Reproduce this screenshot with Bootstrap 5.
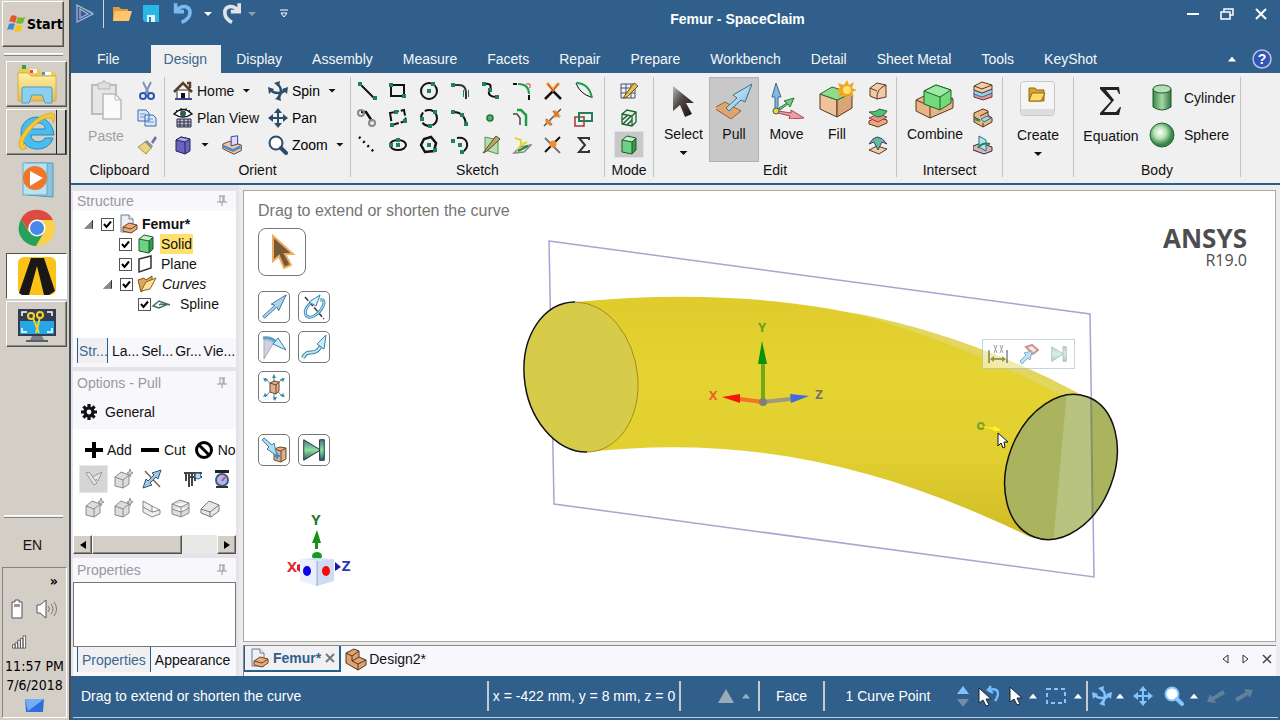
<!DOCTYPE html>
<html lang="en">
<head>
<meta charset="utf-8">
<meta name="viewport" content="width=device-width, initial-scale=1">
<title>Femur - SpaceClaim</title>
<link href="https://cdn.jsdelivr.net/npm/bootstrap@5.3.0/dist/css/bootstrap.min.css" rel="stylesheet">
<style>
:root{--blue:#2f5f8a;--ribbon:#f0f0f0;--panel:#f7f7fc;--task:#d3cfc7}
body{font-family:"Liberation Sans",Arial,sans-serif;font-size:14px;line-height:20px;color:#111;background:var(--blue)}
button{font:inherit;color:inherit;border:0;background:none;padding:0}
a{color:inherit;text-decoration:none}
svg{display:block;flex:none}
.i14{width:14px;height:14px}.i20{width:20px;height:20px}.i24{width:24px;height:24px}.i28{width:28px;height:28px}.i36{width:36px;height:36px}
.dn{width:8px;height:4px;background:#111;clip-path:polygon(0 0,100% 0,50% 100%)}
.up{width:8px;height:5px;background:#fff;clip-path:polygon(50% 0,100% 100%,0 100%)}
/* Windows taskbar */
.taskbar{width:71px;background:var(--task);border-right:2px solid #4a4d50;flex:none;padding:1px 2px 2px}
.raised{border:1px solid;border-color:#fff #55524e #55524e #fff;box-shadow:inset -1px -1px #8d8a84}
.task{width:61px;height:46px;margin:0 0 2px 4px;display:flex;align-items:center;justify-content:center}
.task svg{width:40px;height:40px}
.start{width:62px;height:46px;font-family:"DejaVu Sans Condensed","DejaVu Sans",sans-serif;font-weight:700;font-size:14px;color:#000}
.rule{height:3px;margin:6px 4px 5px 2px;border-top:1px solid #fff;border-bottom:1px solid #86837e;background:#eee}
.open{background:#fff;border:1px solid;border-color:#55524e #fff #fff #55524e}
.tray{height:151px;border:1px solid;border-color:#86837e #fff #fff #86837e;width:65px;font-family:"DejaVu Sans Condensed","DejaVu Sans",sans-serif;font-size:14px;line-height:19px;color:#000}
/* title and tabs */
.titlebar{height:45px;background:var(--blue);color:#fff}
.quick{height:28px}
.tabrow{height:28px;background:var(--blue);color:#f4f7fa}
.tabrow .rtab{height:28px;padding:0 15px;display:flex;align-items:center;white-space:nowrap}
.tabrow .rtab.first{padding-left:26px;padding-right:31px}
.tabrow .rtab.on{background:var(--ribbon);color:#3a688f;padding:0 14px 0 13px}
/* ribbon */
.ribbon{height:112px;background:var(--ribbon);border-bottom:2px solid #24608c;padding-top:4px}
.grp{height:100px;border-right:1px solid #c3c3c3;display:flex;flex-direction:column;flex:none}
.grp>.gb{height:84px;display:flex}
.grp>.gl{height:16px;line-height:18px;text-align:center}
.rows{display:grid;grid-template-rows:repeat(3,27px);align-items:center}
.sk{display:grid;grid-template-columns:repeat(8,31px);grid-template-rows:repeat(3,27px);place-items:center}
.big{display:flex;flex-direction:column;align-items:center;height:85px;border:1px solid transparent;padding-top:5px;white-space:nowrap}
.big svg{margin-bottom:5px}
.big .dn{margin-top:7px;margin-bottom:4px}
.pressed{background:#c8c8c8;border-color:#b0b0b0}
/* docked panels */
.dock{width:168px;background:#e3e3e8;flex:none;padding:6px 3px 0 2px}
.pane{background:var(--panel)}
.phead{height:20px;color:#9999a0;padding:0 8px 0 4px;display:flex;justify-content:space-between;align-items:center}
.phead.tall{height:24px}
.tree{height:127px;background:#fff;padding-top:3px}
.tree .node{height:20px;display:flex;align-items:center;white-space:nowrap}
.node.n0{padding-left:11px}.node.n1{padding-left:30px}.node.n2{padding-left:46px}.node.n3{padding-left:65px}
.node input{appearance:none;width:13px;height:13px;margin:0;border:1px solid #555;background:#fff url("data:image/svg+xml,%3Csvg xmlns='http://www.w3.org/2000/svg' viewBox='0 0 22 22'%3E%3Cpath d='M4 10l5 6L18 5' fill='none' stroke='%23000' stroke-width='4'/%3E%3C/svg%3E")}
.node label{padding:0 1px}
.node label.hot{background:#ffe06f}
.tw{width:9px;height:9px;background:linear-gradient(135deg,transparent 50%,#888 51%);border-bottom:1px solid #333;border-right:1px solid #333;clip-path:polygon(100% 0,100% 100%,0 100%)}
.ptabs{height:29px;padding-left:4px;display:flex}
.ptabs button{height:25px;padding:0 4px;white-space:nowrap}
.ptabs button.on{color:#3a688f;background:#f0f0f3;border:solid #24608c;border-width:0 1px;}
.ptabs.tight button{padding:0 1px}
.ptabs.tight button.on{margin-right:3px}
.split{height:4px;background:#e3e3e8}
.gen{height:34px}
.opt{height:106px;background:#fff;overflow:hidden;padding:8px 0 0 6px}
.mode{height:25px;margin-bottom:2px;gap:8px}
.ic5{display:flex;height:29px;align-items:center}
.ic5>*{width:29px;display:flex;justify-content:center;height:28px;align-items:center;flex:none}
.sb{height:19px;background:#e8e8e6}
.sb>*{height:19px;background:var(--task)}
.sb button{width:19px;display:flex;align-items:center;justify-content:center}
.thumb{width:55%}
/* work area */
.work{background:#ebebf0;padding:5px 4px 0 4px}
.view{background:#fff;border:1px solid #aaa99b;min-height:300px}
.canvas3d{inset:0}
.overlay{padding:11px 14px;width:300px}
.hint{font-size:16px;color:#757575;height:26px;line-height:18px}
.tool{width:32px;height:32px;border:1px solid #777;border-radius:5px;background:#fff;display:flex;align-items:center;justify-content:center}
.tool.large{width:48px;height:48px;border-radius:8px}
.tools{display:grid;grid-template-columns:32px 32px;gap:8px;margin-top:15px}
.tools.after{margin-top:31px}
.brand{font-family:"Open Sans","Noto Sans",sans-serif;color:#4d4d4f;text-align:right;top:29px;right:28px}
.brand b{font-size:26px;line-height:36px;display:block}
.brand span{font-size:16px;line-height:20px;margin-top:-6px;display:block}
.mini{left:71.6%;top:32.8%;width:93px;height:30px;border:1px solid #a9c4d4;background:rgba(255,255,255,.75);opacity:.7}
.docs{height:31px;margin-top:3px;background:var(--panel);border-top:1px solid #888;border-left:1px solid #888}
.doc{height:26px;padding:0 4px}
.doc.on{border:solid #24608c;border-width:0 2px 2px 1px;background:#f1f1f3;color:#2f5f8a;font-weight:700}
/* status bar */
.status{height:44px;background:var(--blue);color:#fff;padding-bottom:4px;position:relative;white-space:nowrap}
.status::after{content:"";position:absolute;left:2px;right:2px;bottom:2px;height:1px;background:#c8ccd0}
.cell{height:30px;border-left:2px solid #c2cad2;display:flex;align-items:center}
.st{display:flex;justify-content:center;align-items:center}
.lt{color:#84c4ff}
.nav3d{color:#2d4c6b}
</style>
</head>
<body>
<svg width="0" height="0" class="position-absolute" aria-hidden="true">
<defs>
<linearGradient id="gTube" x1="0" y1="0" x2="0" y2="1"><stop offset="0" stop-color="#dfcc2c"/><stop offset=".3" stop-color="#e5d332"/><stop offset=".65" stop-color="#e2d030"/><stop offset="1" stop-color="#cfba25"/></linearGradient>
<linearGradient id="gY" x1="0" y1="0" x2="0" y2="1"><stop offset="0" stop-color="#fff2a8"/><stop offset="1" stop-color="#e5bd4c"/></linearGradient>
<linearGradient id="gDk" x1="0" y1="0" x2="1" y2="1"><stop offset="0" stop-color="#bbb"/><stop offset=".4" stop-color="#554a48"/><stop offset="1" stop-color="#1b0e0a"/></linearGradient>
<linearGradient id="gCy"><stop offset="0" stop-color="#3b8748"/><stop offset=".5" stop-color="#a8d8a8"/><stop offset="1" stop-color="#2f763d"/></linearGradient>
<radialGradient id="gSp" cx=".42" cy=".4"><stop offset="0" stop-color="#fff"/><stop offset=".5" stop-color="#b4e2b5"/><stop offset="1" stop-color="#388546"/></radialGradient>
<linearGradient id="gTeal" x1="0" y1="0" x2="0" y2="1"><stop offset="0" stop-color="#4a7a90"/><stop offset=".5" stop-color="#8fe0a0"/><stop offset="1" stop-color="#2c5a6b"/></linearGradient>
<linearGradient id="gBl" x1="0" y1="0" x2="1" y2="1"><stop offset="0" stop-color="#e8faff"/><stop offset="1" stop-color="#6eb4de"/></linearGradient>
</defs>
<symbol id="cube" viewBox="0 0 20 20"><path d="M3 5l5-4 9 2-4 4z" fill="#c3f0c8"/><path d="M3 5l10 2v12L3 17z" fill="#6fd184"/><path d="M13 7l4-4v12l-4 4z" fill="#36984d"/><path d="M3 5l5-4 9 2v12l-4 4-10-2zM3 5l10 2v12M13 7l4-4" fill="none" stroke="#1a5a2b"/></symbol>
<symbol id="gbox" viewBox="0 0 20 20"><path d="M2 8l6-5 8 3v9l-6 4-8-2z" fill="#ddd" stroke="#8a8a8a"/><path d="M2 8l8 3 6-5M10 11v8" fill="none" stroke="#8a8a8a"/><path d="M17 0l1 3 2 1-2 1-1 3-1-3-2-1 2-1z" fill="#ccc" stroke="#999"/></symbol>
<symbol id="slabs" viewBox="0 0 20 20"><path d="M1 12l8 3 10-3v4l-9 3-9-3z" fill="#e9909a" stroke="#6b3434"/><path d="M1 9l8 3 10-4v4l-10 4-8-3z" fill="#93d2ef" stroke="#3a6f93"/><path d="M1 5l8-4 10 3v4L9 12 1 9z" fill="#f2cda9" stroke="#5b3823"/><path d="M1 5l8 3 10-4" fill="none" stroke="#5b3823"/></symbol>
<symbol id="cur" viewBox="0 0 20 20"><path d="M4 1v15l4-3 3 6 3-1-3-6h5z" stroke="#1b2733" stroke-width="1"/></symbol>
<symbol id="pin" viewBox="0 0 12 12"><path d="M3 1h6M4 1v6M8 1v6M1 7h10M6 7v4M7 1v6" fill="none" stroke="#999" stroke-width="1"/></symbol>
<symbol id="pan" viewBox="0 0 20 20"><path d="M10 2v16M2 10h16" stroke="currentColor" stroke-width="2" fill="none"/><path d="M10 0l4 5H6zM10 20l4-5H6zM0 10l5-4v8zM20 10l-5-4v8z" fill="currentColor"/></symbol>
<symbol id="spin" viewBox="0 0 20 20"><path d="M3 9c3 4 11 4 14 0M9 3c5 3 5 10 1 14" fill="none" stroke="currentColor" stroke-width="2.500"/><path d="M0 6l1 7 5-5zM20 6l-1 7-5-5zM6 2l6-2-1 6zM7 18l6 2-1-6z" fill="currentColor"/></symbol>
<symbol id="zoomi" viewBox="0 0 20 20"><circle cx="8" cy="8" r="6.500" fill="#fff" stroke="currentColor" stroke-width="2"/><path d="M13 13l5 5" stroke="currentColor" stroke-width="4" stroke-linecap="round"/></symbol>
<symbol id="docic" viewBox="0 0 20 20"><path d="M3 1h8l4 4v13H3z" fill="#edf1f7" stroke="#6e7a8c"/><path d="M11 1v4h4" fill="#fff" stroke="#6e7a8c"/><path d="M5 13l6-4 8 2v4l-6 4-8-2z" fill="#e9ad7b" stroke="#6b4227"/><path d="M5 13l8 2 6-4" fill="none" stroke="#6b4227"/></symbol>
<symbol id="barrow" viewBox="0 0 30 30"><path d="M3 25l13-12-4-1L28 2l-8 17-2-4L5 27z" fill="url(#gBl)" stroke="#3d6d8d"/></symbol>
<symbol id="playend" viewBox="0 0 30 30"><path d="M4 4l18 11L4 26z" fill="url(#gTeal)" stroke="#12303a"/><path d="M21 4h5v22h-5z" fill="url(#gTeal)" stroke="#12303a"/></symbol>
</svg>

<div class="d-flex vh-100 overflow-hidden">
<!-- Windows taskbar -->
<aside class="taskbar d-flex flex-column">
  <button class="start raised d-flex align-items-center px-0"><svg width="20" height="20" viewBox="0 0 20 20" class="ms-1"><path d="M4 2c2-1 4-1 6 1L8 9C6 8 4 7 2 8z" fill="#e4572a"/><path d="M11 3c2 1 5 1 7 0l-2 6c-2 1-4 1-7 0z" fill="#78b82a"/><path d="M2 10c2-1 4-1 6 0l-2 6c-2-1-4-1-6 0z" fill="#3a8ad6"/><path d="M9 11c2 1 4 1 6 0l-1 6c-2 1-5 1-7 0z" fill="#f6c321"/></svg>Start</button>
  <div class="rule"></div>
  <button class="task raised" aria-label="File Explorer"><svg viewBox="0 0 40 40"><path d="M2 3h8l2 2h10l2 3h15v27H2z" fill="#f0c95c"/><path d="M5 1h4v4H5z" fill="#3b9e4c"/><path d="M13 5h7v4h-7z" fill="#f6f6ee"/><path d="M13 6h3v3h-3z" fill="#e94a3c"/><path d="M25 8h9v3h-9z" fill="#fff"/><path d="M25 8h3v3h-3z" fill="#4a90d9"/><path d="M1 9h10l3 3h25v25H1z" fill="url(#gY)" stroke="#d3ac46"/><path d="M5 39V25q0-2 2-2h26q2 0 2 2v14h-7l-3-8H15l-3 8z" fill="#8bd0ee" stroke="#4d9cc8"/></svg></button>
  <button class="task raised position-relative" aria-label="Internet Explorer"><svg viewBox="0 0 40 40"><path d="M37 23H14c0 8 11 9 14 3h8c-4 16-32 15-32-5S34-2 37 23zM14 17h14c0-8-13-8-14 0z" fill="#49bdee" stroke="#2287c4"/><path d="M5 38C-6 31 16 3 34 1c4 0 5 4 2 10C37 2 25 6 17 14 7 25 3 33 10 36z" fill="#f7c92e" stroke="#d49d17" stroke-width=".7"/></svg><span class="position-absolute h-100 end-0 border-start border-end border-dark px-1"></span></button>
  <button class="task" aria-label="Media Player"><svg viewBox="0 0 40 40"><path d="M10 3h26v34l-26-2z" fill="#8cc4df" stroke="#5598bb"/><path d="M6 3h24v32H6z" fill="#b9e1f2" stroke="#69a8c9"/><circle cx="18" cy="18" r="12" fill="#f0762a"/><path d="M13 11l13 7-13 8z" fill="#fff"/></svg></button>
  <button class="task" aria-label="Chrome"><svg viewBox="0 0 40 40"><circle cx="20" cy="20" r="18" fill="#fcd04b"/><path d="M12 24L4 11Q-2 24 7 33q6 5 12 5l8-14z" fill="#25a05d"/><path d="M4 11A18 18 0 0 1 36 12H20q-6 0-8 6l-1 4z" fill="#dd4b3e"/><circle cx="20" cy="20" r="8.500" fill="#fff"/><circle cx="20" cy="20" r="7" fill="#4788ea"/></svg></button>
  <button class="task open" aria-label="SpaceClaim"><svg viewBox="0 0 40 40"><rect x="1" y="1" width="38" height="38" rx="6" fill="#fbc317"/><path d="M2 37L14 2h13l11 33-6 4h-5L20 10 12 39H5z" fill="#191817"/></svg></button>
  <button class="task raised" aria-label="Snipping recorder"><svg viewBox="0 0 40 40"><path d="M1 5h38v27H1z" fill="#343c50"/><path d="M3 17h34v13H3z" fill="#24a8e5"/><path d="M15 32h10l2 4H13z" fill="#788089"/><path d="M9 36h22v2H9z" fill="#596069"/><path d="M5 12V8h5M30 8h5v4M5 24v4h5M30 28h5v-4" stroke="#fff" fill="none" stroke-width="1.500"/><path d="M16 14l6 15M23 13l-4 16" stroke="#f2d326" stroke-width="2"/><circle cx="14" cy="12" r="3" fill="none" stroke="#f2d326" stroke-width="2"/><circle cx="23" cy="11" r="3" fill="none" stroke="#f2d326" stroke-width="2"/></svg></button>
  <div class="mt-auto rule"></div>
  <div class="text-center mt-2 mb-2 pe-1 py-1">EN</div>
  <div class="tray d-flex flex-column px-0">
    <b class="text-end pe-2 pt-1">»</b>
    <div class="d-flex px-2 pt-2 justify-content-between"><svg width="12" height="20" viewBox="0 0 12 20"><path d="M1 3h3V1h4v2h3v16H1z" fill="#fff" stroke="#555"/><path d="M3 5h6v3H3z" fill="#999"/></svg><svg width="22" height="20" viewBox="0 0 22 20"><path d="M1 6h3l6-5v18l-6-5H1z" fill="#fff" stroke="#555"/><path d="M12 7q3 3 0 6M15 5q4 5 0 10M18 3q5 7 0 14" fill="none" stroke="#777"/></svg></div>
    <svg class="ms-2 mt-3" width="17" height="14" viewBox="0 0 17 16"><path d="M.5 11h3v4h-3zM3.500 9h3v6h-3zM6.500 6h3v9h-3zM9.500 4h3v11h-3zM12.500 1h3v14h-3z" fill="#fff" stroke="#555"/></svg>
    <div class="text-center text-nowrap mt-2">11:57 PM<br>7/6/2018</div>
    <svg class="mx-auto mt-1" width="19" height="14" viewBox="0 0 19 14"><path d="M0 0h19l-1 13H1z" fill="#2f6fdd"/><path d="M0 0h19L3 12z" fill="#76adf2"/></svg>
  </div>
</aside>

<div class="d-flex flex-column flex-grow-1" style="min-width:0">
<header class="titlebar d-flex justify-content-between position-relative">
  <div class="quick d-flex align-items-center ps-1">
    <svg class="i20" viewBox="0 0 20 20"><path d="M2 1v17l16-8zM5 5v9l8-4z" fill="none" stroke="#b9a4df" stroke-width="1.300"/><path d="M1 1l17 8" stroke="#72d09b"/><path d="M2 18l16-8" stroke="#77bfe8"/></svg>
    <span class="vr bg-white opacity-75 ms-2 me-2"></span>
    <svg class="i20" viewBox="0 0 20 20"><path d="M1 3h6l2 2h7v12H1z" fill="#e49a38"/><path d="M3 7h17l-3 10H1z" fill="#ffc56b"/></svg>
    <svg class="i20 mx-2" viewBox="0 0 20 20"><path d="M3 1h16v17H5l-2-2z" fill="#28b8e8"/><path d="M7 11h8v7H7z" fill="#e7f5fa"/><path d="M9 13h2v5H9z" fill="#2685b0"/></svg>
    <svg class="i24 ms-1" viewBox="0 0 20 20"><path d="M3 1v7h7M4 7c4-5 11-4 11 2q0 5-7 8" fill="none" stroke="#7bb9f3" stroke-width="3"/></svg><i class="dn bg-white ms-2"></i>
    <svg class="i24 ms-2" viewBox="0 0 20 20"><path d="M16 1v7H9M15 7C11 2 4 3 4 9q0 5 6 8" fill="none" stroke="#dfe4e9" stroke-width="3"/></svg><i class="dn ms-1 opacity-75" style="background:#aab4be"></i>
    <svg class="ms-4" width="8" height="10" viewBox="0 0 8 10"><path d="M0 1h8M1 4h6L4 8z" fill="none" stroke="#fff"/></svg>
  </div>
  <b class="position-absolute start-50 translate-middle-x" style="top:9px;padding-left:124px">Femur - SpaceClaim</b>
  <div class="d-flex align-items-center quick pe-1">
    <button class="px-2" aria-label="Minimize"><svg class="i14" viewBox="0 0 14 14"><path d="M1 7h12" stroke="#fff" stroke-width="2"/></svg></button>
    <button class="px-2 mx-1" aria-label="Restore"><svg class="i14" viewBox="0 0 14 14"><path d="M4 5V2h9v6h-3M1 5h9v7H1z" stroke="#fff" fill="none" stroke-width="1.500"/></svg></button>
    <button class="px-2" aria-label="Close"><svg class="i14" viewBox="0 0 14 14"><path d="M2 2l10 10M12 2L2 12" stroke="#fff" stroke-width="2"/></svg></button>
  </div>
</header>
<nav class="tabrow d-flex">
  <a class="rtab first" href="#">File</a><a class="rtab on" href="#">Design</a><a class="rtab" href="#">Display</a><a class="rtab" href="#">Assembly</a><a class="rtab" href="#">Measure</a><a class="rtab" href="#">Facets</a><a class="rtab" href="#">Repair</a><a class="rtab" href="#">Prepare</a><a class="rtab" href="#">Workbench</a><a class="rtab" href="#">Detail</a><a class="rtab" href="#">Sheet Metal</a><a class="rtab" href="#">Tools</a><a class="rtab" href="#">KeyShot</a>
  <div class="ms-auto d-flex align-items-center pe-2"><i class="up me-3"></i><svg class="i20" viewBox="0 0 20 20"><circle cx="10" cy="10" r="9" fill="#3455b8" stroke="#b8c4dc" stroke-width="1.500"/><text x="10" y="15" font-size="14" font-weight="700" fill="#fff" text-anchor="middle">?</text></svg></div>
</nav>

<section class="ribbon d-flex">
  <div class="grp" style="width:94px"><div class="gb">
    <button class="big ms-3" style="width:38px;padding-top:1px;color:#a0a0a0"><svg style="width:36px;height:42px" viewBox="0 0 36 42"><path d="M4 6h24v29H4z" fill="#e6e6e6" stroke="#bbb" stroke-width="2"/><path d="M10 4h4q2-5 4 0h4v6H10z" fill="#ddd" stroke="#b5b5b5"/><path d="M15 15h12l6 6v19H15z" fill="#fafafa" stroke="#bbb" stroke-width="1.500"/><path d="M27 15v6h6" fill="none" stroke="#bbb"/></svg>Paste</button>
    <div class="rows ms-2 ps-1"><button aria-label="Cut"><svg class="i20" viewBox="0 0 20 20"><path d="M6 1l6 12M14 1L8 13" stroke="#7b93b5" stroke-width="2"/><circle cx="6" cy="15" r="3" fill="none" stroke="#2b58b0" stroke-width="2"/><circle cx="14" cy="15" r="3" fill="none" stroke="#2b58b0" stroke-width="2"/></svg></button>
    <button aria-label="Copy"><svg class="i20" viewBox="0 0 20 20"><path d="M1 2h8l3 3v8H1zM8 7h8l3 3v8H8z" fill="#d9e7fa" stroke="#3f66a8"/><path d="M3 6h6M3 9h6M10 11h6M10 14h7" stroke="#6d94cf"/></svg></button>
    <button aria-label="Format painter"><svg class="i20" viewBox="0 0 20 20"><path d="M14 7l4-6 2 2-4 6z" fill="#7772a5"/><path d="M10 5l6 6-2 3-7-7z" fill="#8b93a3"/><path d="M8 7l6 6-5 6-8-7z" fill="#e8d484" stroke="#ad9640"/></svg></button></div>
  </div><div class="gl ps-1">Clipboard</div></div>

  <div class="grp" style="width:186px"><div class="gb ps-2">
    <div class="rows pe-2" style="width:95px">
      <button class="d-flex align-items-center"><svg class="i20 me-1" viewBox="0 0 20 20"><path d="M4 9h12v9H4z" fill="#fff" stroke="#333"/><path d="M1 11l9-9 9 9M14 2h3v5" fill="none" stroke="#5d3f21" stroke-width="2.500"/><path d="M8 12h4v6H8z" fill="#111"/><path d="M2 18h17" stroke="#44428a" stroke-width="2"/></svg>Home<i class="dn ms-2"></i></button>
      <button class="d-flex align-items-center text-nowrap"><svg class="i20 me-1" viewBox="0 0 20 20"><path d="M1 6q9-9 18 0-9 6-18 0z" fill="#fff" stroke="#111" stroke-width="1.500"/><circle cx="10" cy="5.500" r="3" fill="#275f55"/><path d="M3 2l2 2M8 0v3M13 0v2M17 2l-2 2" stroke="#111"/><path d="M4 11h14v8H4zM7 11v8M11 11v8M15 11v8M4 14h14M4 17h14" fill="#c7c8dc" stroke="#272742"/></svg>Plan View</button>
      <div class="d-flex align-items-center"><svg class="i20" viewBox="0 0 20 20"><path d="M3 5l5-3 9 2v12l-5 3-9-3z" fill="#6964bd" stroke="#28235f"/><path d="M3 5l9 2 5-3-9-2z" fill="#aaa8e5" stroke="#28235f"/><path d="M12 7v12" stroke="#28235f"/></svg><i class="dn ms-2 me-1"></i><svg class="i24 ms-2" viewBox="0 0 26 26"><path d="M2 12l7-3 13 4v6l-8 4-12-6z" fill="#f0c9a4" stroke="#553a37"/><path d="M2 14l11 5 8-4" fill="none" stroke="#5288c3" stroke-width="3"/><path d="M11 4l7-1v9l-7 2z" fill="#dcdaff" stroke="#39367a"/></svg></div>
    </div>
    <div class="rows">
      <button class="d-flex align-items-center nav3d"><svg class="i20 me-1"><use href="#spin"/></svg><span class="text-black">Spin</span><i class="dn ms-2"></i></button>
      <button class="d-flex align-items-center nav3d"><svg class="i20 me-1"><use href="#pan"/></svg><span class="text-black">Pan</span></button>
      <button class="d-flex align-items-center nav3d"><svg class="i20 me-1"><use href="#zoomi"/></svg><span class="text-black">Zoom</span><i class="dn ms-2"></i></button>
    </div>
  </div><div class="gl">Orient</div></div>

  <div class="grp" style="width:254px"><div class="gb"><div class="sk">
    <svg class="i20" viewBox="0 0 20 20"><path d="M4 4l13 13" stroke="#111" stroke-width="2"/><path d="M1 1h4v4H1zM16 15h4v4h-4z" fill="#20805a"/></svg>
    <svg class="i20" viewBox="0 0 20 20"><path d="M3 4h13v11H3z" fill="none" stroke="#111" stroke-width="2"/><path d="M1 2h4v4H1zM14 13h4v4h-4z" fill="#20805a"/></svg>
    <svg class="i20" viewBox="0 0 20 20"><circle cx="10" cy="10" r="8" fill="none" stroke="#111" stroke-width="2"/><path d="M8 8h4v4H8zM12 1h4v4h-4z" fill="#20805a"/></svg>
    <svg class="i20" viewBox="0 0 20 20"><path d="M3 4h6q7 0 7 8v6" fill="none" stroke="#333" stroke-width="2"/><path d="M1 2h4v4H1zM13 9h1v7h-1zM18 9h1v7h-1z" fill="#20805a"/></svg>
    <svg class="i20" viewBox="0 0 20 20"><path d="M3 3c9-1 7 4 5 7-1 4 2 6 8 6" fill="none" stroke="#111" stroke-width="2"/><path d="M1 1h4v4H1zM7 7h4v4H7zM14 14h4v4h-4z" fill="#20805a"/></svg>
    <svg class="i20" viewBox="0 0 20 20"><path d="M1 3h4M17 14v5" stroke="#111" stroke-width="2"/><path d="M6 3q11 0 11 10" fill="none" stroke="#1d9c4a" stroke-width="2"/><path d="M14 3h4v4" stroke="#c45" fill="none"/></svg>
    <svg class="i20" viewBox="0 0 20 20"><path d="M2 18l8-8 8 8" fill="none" stroke="#111" stroke-width="2.500"/><path d="M4 2l6 7 6-7" fill="none" stroke="#e9a043" stroke-width="3"/><path d="M5 3l5 7 5-7" fill="none" stroke="#d4301a"/></svg>
    <svg class="i20" viewBox="0 0 20 20"><path d="M2 2q4 11 15 14" fill="none" stroke="#111"/><path d="M2 2q13 0 16 15" fill="none" stroke="#1d9c4a" stroke-width="2"/></svg>
    <svg class="i20" viewBox="0 0 20 20"><path d="M4 4h5l6 9" fill="none" stroke="#111" stroke-width="2.500"/><circle cx="4" cy="5" r="3" fill="none" stroke="#888" stroke-width="2"/><circle cx="15" cy="15" r="3" fill="none" stroke="#888" stroke-width="2"/></svg>
    <svg class="i20" viewBox="0 0 20 20"><path d="M2 5l14-3 2 11-14 4z" fill="none" stroke="#111" stroke-width="2" stroke-dasharray="9 2"/><path d="M6 2h4v4H6zM2 15h4v4H2zM15 11h4v4h-4z" fill="#20805a"/></svg>
    <svg class="i20" viewBox="0 0 20 20"><circle cx="10" cy="10" r="8" fill="none" stroke="#111" stroke-width="2" stroke-dasharray="9 2"/><path d="M1 9h4v4H1zM14 2h4v4h-4zM9 16h4v4H9z" fill="#20805a"/></svg>
    <svg class="i20" viewBox="0 0 20 20"><path d="M3 4q12 0 13 13" fill="none" stroke="#111" stroke-width="2"/><path d="M1 2h4v4H1zM10 5h4v4h-4zM14 14h4v4h-4z" fill="#20805a"/></svg>
    <svg class="i20" viewBox="0 0 20 20"><circle cx="9" cy="10" r="3" fill="#5bae72" stroke="#23753d" stroke-width="1.500"/></svg>
    <svg class="i20" viewBox="0 0 20 20"><path d="M5 2h4l5 5v11" fill="none" stroke="#1d9c4a" stroke-width="2.500"/><path d="M1 6h4l3 4v7" fill="none" stroke="#444" stroke-width="1.500"/></svg>
    <svg class="i20" viewBox="0 0 20 20"><path d="M1 18L18 1M3 11l6 6M10 3l6 6" stroke="#555" stroke-width="1.500"/><path d="M3 12l5 5M11 3l6 6M5 15l3-3M11 9l4-4" stroke="#ef8124" stroke-width="3" stroke-dasharray="3 1"/></svg>
    <svg class="i20" viewBox="0 0 20 20"><path d="M1 9h9v9H1z" fill="none" stroke="#a33" stroke-width="1.500"/><path d="M5 5h13v8H5z" fill="none" stroke="#20805a" stroke-width="2"/></svg>
    <svg class="i20" viewBox="0 0 20 20"><path d="M2 2l16 16" stroke="#111" stroke-width="2.500" stroke-dasharray="2 4"/></svg>
    <svg class="i20" viewBox="0 0 20 20"><ellipse cx="10" cy="10" rx="8" ry="5" fill="none" stroke="#111" stroke-width="2"/><path d="M8 8h4v4H8zM1 8h4v4H1zM8 3h4v4H8z" fill="#20805a"/></svg>
    <svg class="i20" viewBox="0 0 20 20"><path d="M2 10l3-6 7-2 5 6-2 8-9 1z" fill="none" stroke="#111" stroke-width="2.500"/><path d="M8 8h4v4H8zM14 13h4v4h-4z" fill="#20805a"/></svg>
    <svg class="i20" viewBox="0 0 20 20"><path d="M7 3c12-2 13 11 5 14" fill="none" stroke="#111" stroke-width="2"/><path d="M1 4h4v4H1zM8 8h4v4H8zM10 15h4v4h-4z" fill="#20805a"/></svg>
    <svg class="i20" viewBox="0 0 20 20"><path d="M4 2l13 3v14L4 15z" fill="#b9dcb2" stroke="#52964d"/><path d="M2 18L15 1l4 3L6 16z" fill="#c7a952" stroke="#4b4638"/></svg>
    <svg class="i20" viewBox="0 0 20 20"><path d="M2 18l6-6 11-2-7 7z" fill="none" stroke="#888" stroke-width="1.500"/><path d="M3 3l6 2v5l-4 5M9 10l6-3" stroke="#e3d62d" stroke-width="2" fill="none"/><path d="M6 16l10-5" stroke="#22883d" stroke-width="2"/></svg>
    <svg class="i20" viewBox="0 0 20 20"><path d="M2 17L17 2" stroke="#111" stroke-width="2"/><path d="M2 3l15 15" stroke="#777" stroke-width="2"/><circle cx="10" cy="9" r="3.500" fill="#f38a2b"/></svg>
    <svg class="i20" viewBox="0 0 20 20"><path d="M15 5V3H5l6 7-6 7h10v-2" fill="none" stroke="#333" stroke-width="2"/></svg>
  </div></div><div class="gl">Sketch</div></div>

  <div class="grp" style="width:49px"><div class="gb justify-content-center"><div class="rows">
    <svg class="i20 mx-auto" viewBox="0 0 20 20"><path d="M2 3h14v14H2zM2 7h14M2 12h14M7 3v14M12 3v14" fill="none" stroke="#465064"/><path d="M4 17L15 2l4 3L8 16z" fill="#e1c34d" stroke="#6b5625"/></svg>
    <svg class="i20 mx-auto" viewBox="0 0 20 20"><path d="M3 6l5-4 9 2v10l-4 4-10-2zM3 6l10 2v10M13 8l4-4" fill="#e1f2e3" stroke="#1d6030" stroke-width="1.300"/><path d="M3 12l6-5M4 16l8-8M8 17l5-5" stroke="#1d6030" stroke-width="1.500"/></svg>
    <button class="pressed border" style="width:30px;height:27px" aria-label="3D mode"><svg class="i20 mx-auto"><use href="#cube"/></svg></button>
  </div></div><div class="gl">Mode</div></div>

  <div class="grp" style="width:243px"><div class="gb ps-1">
    <button class="big" style="width:51px"><svg class="i36" viewBox="0 0 36 36"><path d="M7 3v25l7-6 5 12 7-3-6-11h8z" fill="url(#gDk)"/></svg>Select<i class="dn"></i></button>
    <button class="big pressed" style="width:50px"><svg class="i36" viewBox="0 0 36 36"><path d="M-2 25l11-6 16 9-10 8z" fill="#dda570" stroke="#936235"/><path d="M10 25l11-10-4-3L36 1l-7 18-4-2-12 11z" fill="url(#gBl)" stroke="#3d6d8d"/></svg>Pull</button>
    <button class="big" style="width:55px"><svg class="i36" viewBox="0 0 36 36"><path d="M6 28V14H3L7 0l5 14H9v14z" fill="#82b9e3" stroke="#3d6d8d"/><path d="M10 25l8-5-3-2 10-3-4 9-2-3-8 6z" fill="#78c887" stroke="#2a7a3c"/><path d="M9 28l13 2v-3l13 8-15 1 1-3-12-3z" fill="#e9a0a5" stroke="#a8464f"/><circle cx="7" cy="28" r="3" fill="#e7d840" stroke="#555"/></svg>Move</button>
    <button class="big" style="width:46px"><svg class="i36 overflow-visible" viewBox="0 0 36 36"><path d="M1 11l17 6v17L1 26z" fill="#eec29a" stroke="#523620"/><path d="M18 17l15-7v15l-15 9z" fill="#dba577" stroke="#523620"/><path d="M1 11l12-7 20 6-15 7z" fill="#8edb8f" stroke="#2e6c34"/><path d="M28-3l2 5 5-3-2 6 5 2-5 2 2 5-6-2-2 5-2-5-6 2 2-5-5-2 5-2-2-5 6 2z" fill="#f4a51e"/><circle cx="28" cy="7" r="4" fill="#ffe36c"/></svg>Fill</button>
    <div class="rows ms-2"><svg class="i20" viewBox="0 0 20 20"><path d="M2 7l7-5 9 2v12l-9 2-7-3z" fill="#f1cba6" stroke="#563a27"/><path d="M18 4q-10 4-9 14M2 7l7 3" fill="none" stroke="#563a27"/></svg><svg class="i20" viewBox="0 0 20 20"><path d="M1 13l9-4 9 3v3l-9 4-9-3z" fill="#e9aa79" stroke="#5b3823"/><path d="M1 10l9-4 9 3-9 5z" fill="#f28e91" stroke="#8b4343"/><path d="M1 4q8 0 10-3l8 2q-3 6-10 6z" fill="#50bf76" stroke="#28693c"/></svg><svg class="i20" viewBox="0 0 20 20"><path d="M1 15l8-4 10 3-8 5z" fill="#f2cda9" stroke="#5b3823"/><path d="M1 9q8-14 18 0l-5-2-4 8-4-8z" fill="#66bb9b" stroke="#40436d"/></svg></div>
  </div><div class="gl">Edit</div></div>

  <div class="grp" style="width:106px"><div class="gb ps-2">
    <button class="big" style="width:60px"><svg width="40" height="36" viewBox="0 0 40 36"><path d="M1 17l10-5 27 4v9L15 35 1 28z" fill="#e7b486" stroke="#593821"/><path d="M1 17l14 6 23-8M15 23v12" fill="none" stroke="#593821"/><path d="M9 8l12-6 15 5v13l-11 7-16-6z" fill="#73d97d" stroke="#21612c"/><path d="M9 8l12-6 15 5-11 7z" fill="#9beaa2" stroke="#21612c"/><path d="M25 14v13" fill="none" stroke="#21612c"/></svg>Combine</button>
    <div class="rows ms-2"><svg class="i20"><use href="#slabs"/></svg><svg class="i20" viewBox="0 0 20 20"><path d="M1 5l9-4 5 2v4l4 3v4l-9 5-9-5z" fill="#e9b88a" stroke="#50301c"/><path d="M1 9l6 3M7 8l8-4M10 19v-4" stroke="#50301c" fill="none"/><path d="M1 11l6 2" stroke="#2b9c43" stroke-width="2"/><path d="M8 11l6-3 4 2-7 4z" fill="#a4d3ed" stroke="#336b8c"/></svg><svg class="i20" viewBox="0 0 20 20"><path d="M0 11l8-3 11 4v4l-8 3-11-4z" fill="#d7b4b0" stroke="#36264c"/><path d="M6 1l7 4v11l-7-4z" fill="#b1e4f2" stroke="#336b8c"/><path d="M5 13q4-6 12-4" stroke="#23864a" stroke-width="2" fill="none"/></svg></div>
  </div><div class="gl">Intersect</div></div>

  <div class="grp" style="width:71px"><div class="gb justify-content-center"><button class="big" style="padding-top:3px"><svg class="i36 mb-2" viewBox="0 0 36 36"><rect x=".5" y=".5" width="34" height="34" rx="3" fill="#f5f5f5" stroke="#c8c8c8"/><path d="M1 28h33v6H1z" fill="#ddd"/><path d="M9 7h6l2 2h7v11H9z" fill="#d9a32d" stroke="#916914"/><path d="M12 12h13l-4 8H9z" fill="#ffda66" stroke="#916914"/></svg>Create<i class="dn"></i></button></div></div>

  <div class="grp" style="width:167px"><div class="gb ps-2">
    <button class="big" style="width:58px;padding-top:4px"><svg class="i36 mb-2" viewBox="0 0 36 36"><path d="M27 12h-1l-2-4H13l8 10-10 12h12l4-5h1l-2 8H7v-2l11-12L7 7V5h19z" fill="#222"/></svg>Equation</button>
    <div class="d-flex flex-column ms-2 text-nowrap"><button class="d-flex align-items-center mt-1" style="height:34px"><svg class="i28 me-2" viewBox="0 0 28 28"><path d="M5 5v18q9 6 18 0V5z" fill="url(#gCy)" stroke="#22572e"/><ellipse cx="14" cy="5" rx="9" ry="4" fill="#b6dfb6" stroke="#22572e"/></svg>Cylinder</button><button class="d-flex align-items-center" style="height:40px"><svg class="i28 me-2" viewBox="0 0 28 28"><circle cx="14" cy="14" r="12" fill="url(#gSp)" stroke="#296636"/></svg>Sphere</button></div>
  </div><div class="gl">Body</div></div>
</section>

<main class="d-flex flex-grow-1" style="min-height:0">
<aside class="dock d-flex flex-column">
  <div class="pane">
    <div class="phead">Structure<svg width="12" height="12"><use href="#pin"/></svg></div>
    <div class="tree">
      <div class="node n0"><i class="tw me-2"></i><input id="n1" type="checkbox" checked><svg class="i20 ms-1"><use href="#docic"/></svg><label for="n1" class="ps-1"><b>Femur*</b></label></div>
      <div class="node n2"><input id="n2" type="checkbox" checked><svg class="i20 mx-1"><use href="#cube"/></svg><label for="n2" class="hot">Solid</label></div>
      <div class="node n2"><input id="n3" type="checkbox" checked><svg class="i20 mx-1" viewBox="0 0 20 20"><path d="M3 5l12-3v12L3 18z" fill="#fff" stroke="#333" stroke-width="1.500"/></svg><label for="n3">Plane</label></div>
      <div class="node n1"><i class="tw me-2"></i><input id="n4" type="checkbox" checked><svg class="i20 mx-1" viewBox="0 0 20 20"><path d="M1 6l6-2 2 2 6-4v9L4 18z" fill="#dca85a" stroke="#7d561d"/><path d="M4 17l5-9 10-4-6 11z" fill="#ffdf9a" stroke="#8a6323"/></svg><label for="n4"><em>Curves</em></label></div>
      <div class="node n3"><input id="n5" type="checkbox" checked><svg class="i20 me-1" viewBox="0 0 20 20"><path d="M19 11L8 7l-6 5 6 2 7-3-5-1-2 1" fill="none" stroke="#456b60" stroke-width="1.500"/></svg><label for="n5" class="ms-1">Spline</label></div>
    </div>
    <div class="ptabs tight"><button class="on" style="width:31px">Str...</button><button>La...</button><button>Sel...</button><button>Gr...</button><button>Vie...</button></div>
  </div>
  <div class="split"></div>
  <div class="pane">
    <div class="phead tall">Options - Pull<svg width="12" height="12"><use href="#pin"/></svg></div>
    <button class="gen d-flex align-items-center ps-2"><svg class="i20 me-2" viewBox="0 0 20 20" style="width:16px"><circle cx="10" cy="10" r="5" fill="none" stroke="#111" stroke-width="4"/><path d="M10 0v20M0 10h20M3 3l14 14M17 3L3 17" stroke="#111" stroke-width="4" stroke-dasharray="4 12 4 99"/></svg>General</button>
    <div class="opt">
      <div class="mode d-flex align-items-center text-nowrap ps-1"><span class="d-flex align-items-center gap-1"><svg class="i20" viewBox="0 0 20 20"><path d="M11 2v16M2 10h18" stroke="#000" stroke-width="4"/></svg>Add</span><span class="d-flex align-items-center gap-1"><svg class="i20" viewBox="0 0 20 20"><path d="M1 10h18" stroke="#000" stroke-width="4"/></svg>Cut</span><span class="d-flex align-items-center gap-1"><svg class="i20" viewBox="0 0 20 20"><circle cx="10" cy="10" r="7.500" fill="none" stroke="#000" stroke-width="3"/><path d="M5 5l10 10" stroke="#000" stroke-width="3"/></svg>No</span></div>
      <div class="ic5"><span class="pressed border opacity-75"><svg class="i20" viewBox="0 0 20 20"><path d="M2 4l8 12 3-2L5 3zM8 8l10-5-4 9-2-2" fill="#ddd" stroke="#777"/></svg></span><span><svg class="i20" viewBox="0 0 20 20"><use href="#gbox"/></svg></span><span><svg class="i20" viewBox="0 0 20 20"><path d="M3 2l15 16" stroke="#77694a" stroke-width="1.500"/><path d="M1 19l3-9 2 2 6-6-2-2 9-3-3 9-2-2-6 6 2 2z" fill="#9fc7e7" stroke="#31567a"/></svg></span><span style="width:12px"></span><span><svg class="i20" viewBox="0 0 20 20"><path d="M3 3v9M6 3v15M12 4v8M9 4v13M1 4h18M6 8h13" stroke="#444" stroke-width="2"/><circle cx="15" cy="7" r="3" fill="#b9d9f3" stroke="#446a96"/></svg></span><span><svg class="i20" viewBox="0 0 20 20"><path d="M3 1h14v3H3z" fill="#222"/><circle cx="10" cy="11" r="6" fill="#a7baf0" stroke="#495680" stroke-width="2"/><path d="M10 12l3-4" stroke="#d46" stroke-width="2"/><path d="M4 18h12" stroke="#333" stroke-width="2"/></svg></span></div>
      <div class="ic5"><span><svg class="i20"><use href="#gbox"/></svg></span><span><svg class="i20"><use href="#gbox"/></svg></span><span><svg class="i20" viewBox="0 0 20 20"><path d="M1 3l9 5v6l8-2v4l-8 3-9-5z" fill="#eee" stroke="#888"/><path d="M1 9l9 5M10 8l8 4" fill="none" stroke="#888"/></svg></span><span><svg class="i20" viewBox="0 0 20 20"><path d="M1 6l8-4 9 3v10l-8 4-9-3zM1 6l9 3 8-4M10 9v10M1 11l9 3 8-4" fill="#ddd" stroke="#888"/></svg></span><span><svg class="i20" viewBox="0 0 20 20"><path d="M1 11l8-8 10 4v6l-8 6-10-4z" fill="#e7e7e7" stroke="#777"/><path d="M1 11l9 3 9-7M10 14v5" fill="none" stroke="#777"/></svg></span></div>
    </div>
    <div class="sb d-flex"><button class="raised" aria-label="Scroll left"><svg width="6" height="8"><path d="M6 0v8L0 4z"/></svg></button><div class="raised thumb"></div><button class="raised ms-auto" aria-label="Scroll right"><svg width="6" height="8"><path d="M0 0v8l6-4z"/></svg></button></div>
  </div>
  <div class="split"></div>
  <div class="pane d-flex flex-column flex-grow-1">
    <div class="phead tall">Properties<svg width="12" height="12"><use href="#pin"/></svg></div>
    <div class="bg-white flex-grow-1" style="border:1px solid #777"></div>
    <div class="ptabs"><button class="on">Properties</button><button>Appearance</button></div>
  </div>
</aside>

<section class="work d-flex flex-column flex-grow-1" style="min-width:0">
  <div class="view flex-grow-1 position-relative overflow-hidden">
    <svg class="position-absolute canvas3d w-100 h-100" viewBox="244 191 1031 450" preserveAspectRatio="xMidYMid meet">
      <path d="M549 241l541 73 4 263-540-73z" fill="#fff" stroke="#aaa4d0" stroke-width="1.500"/>
      <path d="M576 302C760 284 920 311 1077 393L1048 540 1030 537C880 464 745 435 587 452z" fill="url(#gTube)"/>
      <path d="M850 312Q970 335 1080 394L1062 396Q970 346 850 312z" fill="#e3d65e"/>
      <ellipse cx="581" cy="377" rx="56" ry="75" transform="rotate(-10 581 377)" fill="#d6cc4a"/>
      <path d="M575 302A56 75 -10 0 1 587 452" fill="none" stroke="#a98919"/>
      <path d="M575 302A56 75 -10 0 0 587 452" fill="none" stroke="#111" stroke-width="1.500"/>
      <clipPath id="cap"><ellipse cx="1061" cy="467" rx="53" ry="75" transform="rotate(21 1061 467)"/></clipPath>
      <g clip-path="url(#cap)"><path d="M1000 390h120v155h-120z" fill="#aab35e"/><path d="M1067 390h24l2 155h-40z" fill="#b8c37f"/><path d="M1091 390l2 155" stroke="#85906e" stroke-width="2"/></g>
      <ellipse cx="1061" cy="467" rx="53" ry="75" transform="rotate(21 1061 467)" fill="none" stroke="#111" stroke-width="1.500"/>
      <path d="M763 400v-42" stroke="#72a81c" stroke-width="4"/><path d="M762 341l5 23h-9z" fill="#079307"/>
      <path d="M763 402l-24-3" stroke="#f37224" stroke-width="4"/><path d="M722 397l18-3v9z" fill="#f21708"/>
      <path d="M763 402l28-3" stroke="#9c9a7c" stroke-width="4"/><path d="M809 396l-19-2 1 9z" fill="#426add"/>
      <circle cx="763" cy="402" r="4" fill="#827f74"/>
      <g font-size="13" font-weight="700" font-family="Noto Sans, sans-serif" text-anchor="middle"><text x="762" y="332" fill="#5ea51d">Y</text><text x="713" y="400" fill="#ed6026">X</text><text x="819" y="399" fill="#786e72">Z</text>
      <text x="316" y="525" font-size="15" fill="#28792b">Y</text><text x="292" y="572" font-size="15" fill="#e02a2a">X</text><text x="346" y="571" font-size="15" fill="#2b34bd">Z</text></g>
      <path d="M317 530l4 13h-9zM315 542h3v7h-3z" fill="#149117"/><ellipse cx="317" cy="556" rx="5" ry="4" fill="#159b20"/><path d="M300 559l17-1 17 1-17 2z" fill="#d7e0f6"/><path d="M300 559l17 2v25l-17-5z" fill="#e9effc"/><path d="M317 561l17-2v22l-17 5z" fill="#cfdaf5"/><path d="M317 561v25" stroke="#98a9cf"/><ellipse cx="307" cy="571" rx="4" ry="5" fill="#0804e2"/><ellipse cx="326" cy="571" rx="4" ry="5" fill="#f20b0b"/><path d="M297 565l3-1v8l-3-2z" fill="#df2020"/><path d="M335 562l6 5-6 4z" fill="#1818a0"/>
      <circle cx="981" cy="426" r="3" fill="none" stroke="#7d9f25" stroke-width="2"/><path d="M984 426l9 1 1-2 9 6-10 1v-2l-9-2z" fill="#fff028" stroke="#ddd01c"/>
      <path d="M998 433v13l3-3 2 5 2-1-1-5h4z" fill="#fff" stroke="#111"/>
    </svg>
    <div class="overlay position-relative">
      <div class="hint text-nowrap">Drag to extend or shorten the curve</div>
      <button class="tool large" aria-label="Select"><svg class="i36" viewBox="0 0 36 36"><path d="M9 2v25l6-5 5 12 7-3-6-11h8z" fill="#765938" stroke="#f0ab62" stroke-width="2"/></svg></button>
      <div class="tools">
        <button class="tool" aria-label="Direction"><svg class="i28"><use href="#barrow"/></svg></button>
        <button class="tool" aria-label="Revolve"><svg class="i28" viewBox="0 0 28 28"><path d="M5 4l19 22" stroke="#333" stroke-dasharray="5 2" stroke-width="1.500"/><path d="M12 9C1 17 5 28 14 23S28 5 20 7" fill="none" stroke="#4a92bd" stroke-width="3"/><path d="M12 9C1 17 5 28 14 23S28 5 20 7" fill="none" stroke="#c6ecfa"/><path d="M20 2l-4 11-7-4z" fill="#d4f3fc" stroke="#3c7ea8"/></svg></button>
        <button class="tool" aria-label="Draft"><svg class="i28" viewBox="0 0 28 28"><path d="M4 6v20L14 9z" fill="#ced1e0" stroke="#a9a9bb"/><path d="M3 5q9-1 14 5" fill="none" stroke="#5aa0cb" stroke-width="3"/><path d="M18 5l8 12-13-6z" fill="#c9eefa" stroke="#3c7ea8"/></svg></button>
        <button class="tool" aria-label="Sweep"><svg class="i28" viewBox="0 0 28 28"><path d="M3 25c5-11 11 0 18-12" fill="none" stroke="#427f9e" stroke-width="4"/><path d="M3 25c5-11 11 0 18-12" fill="none" stroke="#baeafa" stroke-width="2"/><path d="M26 2l-2 14-7-5z" fill="#c9eefa" stroke="#3c7ea8"/></svg></button>
        <button class="tool" aria-label="Scale body"><svg class="i28" viewBox="0 0 28 28"><path d="M5 5l18 19M23 5L5 24M14 2v25" stroke="#4687a8"/><path d="M3 5l5 1-3 3zM25 5l-5 1 3 3zM3 24l5-1-3-3zM25 24l-5-1 3-3zM14 1l2 4h-4zM15 28l2-4h-4z" fill="#4687a8"/><path d="M10 10l4-2 5 1v9l-3 3-6-2z" fill="#ddb08c" stroke="#6d472d"/><path d="M10 10l6 2 3-3M16 12v9" fill="none" stroke="#6d472d"/></svg></button>
      </div>
      <div class="tools after"><button class="tool" aria-label="Up to"><svg class="i28" viewBox="0 0 28 28"><path d="M14 13l6-2 6 1v11l-5 3-7-2z" fill="#ddb08c" stroke="#6d472d"/><path d="M14 13l7 2 5-3M21 15v11" fill="none" stroke="#6d472d"/><path d="M2 4l2-2 8 7 2-2 3 13-10-7 2-2z" fill="#afdef1" stroke="#3c7ea8"/><path d="M14 20h6M17 17v6" stroke="#3e8bcd" stroke-width="2"/></svg></button><button class="tool" aria-label="Full pull"><svg class="i28"><use href="#playend"/></svg></button></div>
    </div>
    <div class="brand position-absolute"><b>ANSYS</b><span>R19.0</span></div>
    <div class="mini position-absolute d-flex align-items-center justify-content-around"><svg class="i20" viewBox="0 0 20 20"><path d="M1 6v13M19 6v13M4 15h12" stroke="#555" stroke-width="1.500"/><path d="M2 15l4-3v6zM18 15l-4-3v6z" fill="#7b7b24"/><path d="M6 1l3 8M9 1L6 9M12 1l3 8M15 1l-3 8" stroke="#777"/></svg><svg class="i20" viewBox="0 0 20 20"><path d="M7 3l6-2 6 5-5 4z" fill="#f8ded4" stroke="#b76957" stroke-width="2"/><path d="M1 17l6-6-2-2 8-2-2 9-2-2-6 6z" fill="#a5d4ef" stroke="#4e8bac"/></svg><svg class="i20 opacity-50"><use href="#playend"/></svg></div>
  </div>
  <div class="docs d-flex text-nowrap">
    <div class="doc on d-flex align-items-center"><svg class="i20 me-1"><use href="#docic"/></svg>Femur*<button class="ms-1" aria-label="Close Femur"><svg width="10" height="10"><path d="M1 1l8 8M9 1L1 9" stroke="#777" stroke-width="2"/></svg></button></div>
    <div class="doc d-flex align-items-center"><svg class="i24" viewBox="0 0 24 24"><path d="M1 6l8-4 5 2v6l7 3v5l-8 5-12-7z" fill="#dfa36f" stroke="#523620"/><path d="M1 6l6 3v5l6 3 8-4M7 9l7-5M7 14l7-4M13 17v6" fill="none" stroke="#523620"/></svg>Design2*</div>
    <div class="ms-auto d-flex align-items-center gap-2 pb-1"><svg width="8" height="10"><path d="M6 1v8L1 5z" fill="none" stroke="#333"/></svg><svg class="ms-1" width="8" height="10"><path d="M1 1v8l5-4z" fill="none" stroke="#333"/></svg><svg class="ms-1 me-1" width="10" height="10"><path d="M1 1l8 8M9 1L1 9" stroke="#444" stroke-width="1.500"/></svg></div>
  </div>
</section>
</main>

<footer class="status d-flex align-items-center">
  <span class="flex-grow-1" style="padding-left:10px">Drag to extend or shorten the curve</span>
  <div class="cell justify-content-center" style="width:192px">x = -422 mm, y = 8 mm, z = 0</div>
  <div class="cell justify-content-end pe-2" style="width:79px"><svg width="16" height="14" class="me-2"><path d="M8 0l8 14H0z" fill="#9aabba"/></svg><i class="up opacity-50"></i></div>
  <div class="cell justify-content-center" style="width:65px">Face</div>
  <div class="cell justify-content-center" style="width:128px">1 Curve Point</div>
  <span class="st" style="width:24px"><svg width="12" height="24"><path d="M6 2l6 8H0z" fill="#7fc2ff"/><path d="M6 23l6-8H0z" fill="#758ca5"/></svg></span>
  <span class="st" style="width:28px"><svg class="i24" viewBox="0 0 24 22"><path d="M14 1l-3 4 5 3M12 5c10-3 11 4 6 11" fill="none" stroke="#75b9ff" stroke-width="2.500"/><use href="#cur" width="20" height="20" y="2" x="-2" fill="#fff"/></svg></span>
  <span class="st" style="width:26px"><svg class="i20" fill="#fff"><use href="#cur"/></svg></span><i class="up"></i>
  <span class="st" style="width:37px"><svg class="i20" viewBox="0 0 20 20"><path d="M1 3h18v14H1z" fill="none" stroke="#84c4ff" stroke-width="2" stroke-dasharray="4 3"/></svg></span><i class="up"></i>
  <div class="cell ps-1 ms-1 lt"><svg class="i20"><use href="#spin"/></svg></div><i class="up ms-1"></i>
  <span class="st lt" style="width:38px"><svg class="i20"><use href="#pan"/></svg></span><span class="st lt" style="width:24px"><svg class="i20"><use href="#zoomi"/></svg></span><i class="up ms-1"></i>
  <span class="st gap-2 ps-2 justify-content-start" style="width:82px"><svg class="i20" viewBox="0 0 20 20"><path d="M1 16l3-8 2 3 11-7 2 4-11 6 2 3z" fill="#60809c"/></svg><svg class="i20" viewBox="0 0 20 20"><path d="M19 4l-3 8-2-3-11 7-2-4 11-6-2-3z" fill="#60809c"/></svg></span>
</footer>
</div>
</div>
<script src="https://cdn.jsdelivr.net/npm/bootstrap@5.3.0/dist/js/bootstrap.bundle.min.js"></script>
</body>
</html>
